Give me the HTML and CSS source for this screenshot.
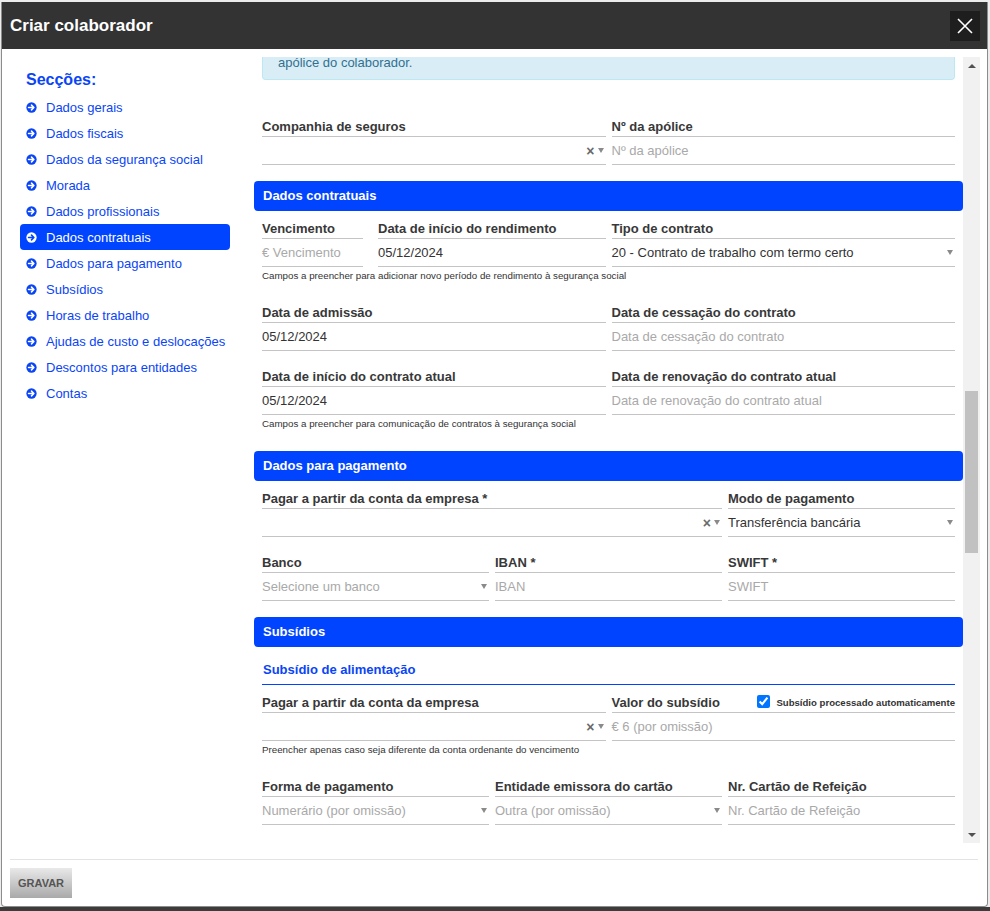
FILE: index.html
```html
<!DOCTYPE html>
<html lang="pt">
<head>
<meta charset="utf-8">
<title>Criar colaborador</title>
<link rel="stylesheet" href="styles.css">
</head>
<body>
<div class="modal">
  <header class="modal-header">
    <h1>Criar colaborador</h1>
    <button class="close" aria-label="Fechar">
      <svg width="16" height="16" viewBox="0 0 16 16"><path d="M1 1L15 15M15 1L1 15" stroke="#fff" stroke-width="1.6" fill="none"/></svg>
    </button>
  </header>
  <div class="modal-body">
    <nav class="sidebar">
      <h2>Secções:</h2>
      <ul class="nav">
        <li><a class="nav-item"><svg class="ico" viewBox="0 0 12 12"><circle cx="6" cy="6" r="5.6" class="ico-c"/><path d="M2.8 6H8.4M6 3.4L8.6 6L6 8.6" class="ico-a"/></svg>Dados gerais</a></li>
        <li><a class="nav-item"><svg class="ico" viewBox="0 0 12 12"><circle cx="6" cy="6" r="5.6" class="ico-c"/><path d="M2.8 6H8.4M6 3.4L8.6 6L6 8.6" class="ico-a"/></svg>Dados fiscais</a></li>
        <li><a class="nav-item"><svg class="ico" viewBox="0 0 12 12"><circle cx="6" cy="6" r="5.6" class="ico-c"/><path d="M2.8 6H8.4M6 3.4L8.6 6L6 8.6" class="ico-a"/></svg>Dados da segurança social</a></li>
        <li><a class="nav-item"><svg class="ico" viewBox="0 0 12 12"><circle cx="6" cy="6" r="5.6" class="ico-c"/><path d="M2.8 6H8.4M6 3.4L8.6 6L6 8.6" class="ico-a"/></svg>Morada</a></li>
        <li><a class="nav-item"><svg class="ico" viewBox="0 0 12 12"><circle cx="6" cy="6" r="5.6" class="ico-c"/><path d="M2.8 6H8.4M6 3.4L8.6 6L6 8.6" class="ico-a"/></svg>Dados profissionais</a></li>
        <li><a class="nav-item active"><svg class="ico" viewBox="0 0 12 12"><circle cx="6" cy="6" r="5.6" class="ico-c"/><path d="M2.8 6H8.4M6 3.4L8.6 6L6 8.6" class="ico-a"/></svg>Dados contratuais</a></li>
        <li><a class="nav-item"><svg class="ico" viewBox="0 0 12 12"><circle cx="6" cy="6" r="5.6" class="ico-c"/><path d="M2.8 6H8.4M6 3.4L8.6 6L6 8.6" class="ico-a"/></svg>Dados para pagamento</a></li>
        <li><a class="nav-item"><svg class="ico" viewBox="0 0 12 12"><circle cx="6" cy="6" r="5.6" class="ico-c"/><path d="M2.8 6H8.4M6 3.4L8.6 6L6 8.6" class="ico-a"/></svg>Subsídios</a></li>
        <li><a class="nav-item"><svg class="ico" viewBox="0 0 12 12"><circle cx="6" cy="6" r="5.6" class="ico-c"/><path d="M2.8 6H8.4M6 3.4L8.6 6L6 8.6" class="ico-a"/></svg>Horas de trabalho</a></li>
        <li><a class="nav-item"><svg class="ico" viewBox="0 0 12 12"><circle cx="6" cy="6" r="5.6" class="ico-c"/><path d="M2.8 6H8.4M6 3.4L8.6 6L6 8.6" class="ico-a"/></svg>Ajudas de custo e deslocações</a></li>
        <li><a class="nav-item"><svg class="ico" viewBox="0 0 12 12"><circle cx="6" cy="6" r="5.6" class="ico-c"/><path d="M2.8 6H8.4M6 3.4L8.6 6L6 8.6" class="ico-a"/></svg>Descontos para entidades</a></li>
        <li><a class="nav-item"><svg class="ico" viewBox="0 0 12 12"><circle cx="6" cy="6" r="5.6" class="ico-c"/><path d="M2.8 6H8.4M6 3.4L8.6 6L6 8.6" class="ico-a"/></svg>Contas</a></li>
      </ul>
    </nav>
    <div class="main">
      <div class="scroller">
        <div class="content">
          <div class="alert">apólice do colaborador.</div>

          <div class="row g2 mt35">
            <div class="field">
              <div class="f-label">Companhia de seguros</div>
              <div class="f-input"><span class="val"></span><span class="sel-icons"><span class="clear">×</span><span class="caret"></span></span></div>
            </div>
            <div class="field">
              <div class="f-label">Nº da apólice</div>
              <div class="f-input"><span class="ph">Nº da apólice</span></div>
            </div>
          </div>

          <div class="section-title mt16">Dados contratuais</div>

          <div class="row g2 mt6">
            <div class="row gv">
              <div class="field">
                <div class="f-label">Vencimento</div>
                <div class="f-input"><span class="ph">€ Vencimento</span></div>
              </div>
              <div class="field">
                <div class="f-label">Data de início do rendimento</div>
                <div class="f-input"><span class="val">05/12/2024</span></div>
              </div>
            </div>
            <div class="field">
              <div class="f-label">Tipo de contrato</div>
              <div class="f-input"><span class="val">20 - Contrato de trabalho com termo certo</span><span class="sel-icons"><span class="caret"></span></span></div>
            </div>
          </div>
          <p class="help">Campos a preencher para adicionar novo período de rendimento à segurança social</p>

          <div class="row g2 mt19">
            <div class="field">
              <div class="f-label">Data de admissão</div>
              <div class="f-input"><span class="val">05/12/2024</span></div>
            </div>
            <div class="field">
              <div class="f-label">Data de cessação do contrato</div>
              <div class="f-input"><span class="ph">Data de cessação do contrato</span></div>
            </div>
          </div>

          <div class="row g2 mt14">
            <div class="field">
              <div class="f-label">Data de início do contrato atual</div>
              <div class="f-input"><span class="val">05/12/2024</span></div>
            </div>
            <div class="field">
              <div class="f-label">Data de renovação do contrato atual</div>
              <div class="f-input"><span class="ph">Data de renovação do contrato atual</span></div>
            </div>
          </div>
          <p class="help">Campos a preencher para comunicação de contratos à segurança social</p>

          <div class="section-title mt21">Dados para pagamento</div>

          <div class="row g3 mt6">
            <div class="field span2">
              <div class="f-label">Pagar a partir da conta da empresa *</div>
              <div class="f-input"><span class="val"></span><span class="sel-icons"><span class="clear">×</span><span class="caret"></span></span></div>
            </div>
            <div class="field">
              <div class="f-label">Modo de pagamento</div>
              <div class="f-input"><span class="val">Transferência bancária</span><span class="sel-icons"><span class="caret"></span></span></div>
            </div>
          </div>

          <div class="row g3 mt14">
            <div class="field">
              <div class="f-label">Banco</div>
              <div class="f-input"><span class="ph">Selecione um banco</span><span class="sel-icons"><span class="caret"></span></span></div>
            </div>
            <div class="field">
              <div class="f-label">IBAN *</div>
              <div class="f-input"><span class="ph">IBAN</span></div>
            </div>
            <div class="field">
              <div class="f-label">SWIFT *</div>
              <div class="f-input"><span class="ph">SWIFT</span></div>
            </div>
          </div>

          <div class="section-title mt16">Subsídios</div>
          <div class="subsection">Subsídio de alimentação</div>

          <div class="row g2 mt6">
            <div class="field">
              <div class="f-label">Pagar a partir da conta da empresa</div>
              <div class="f-input"><span class="val"></span><span class="sel-icons"><span class="clear">×</span><span class="caret"></span></span></div>
            </div>
            <div class="field">
              <div class="f-label">Valor do subsídio
                <label class="check"><input type="checkbox" checked><span>Subsídio processado automaticamente</span></label>
              </div>
              <div class="f-input"><span class="ph">€ 6 (por omissão)</span></div>
            </div>
          </div>
          <p class="help">Preencher apenas caso seja diferente da conta ordenante do vencimento</p>

          <div class="row g3 mt19">
            <div class="field">
              <div class="f-label">Forma de pagamento</div>
              <div class="f-input"><span class="ph">Numerário (por omissão)</span><span class="sel-icons"><span class="caret"></span></span></div>
            </div>
            <div class="field">
              <div class="f-label">Entidade emissora do cartão</div>
              <div class="f-input"><span class="ph">Outra (por omissão)</span><span class="sel-icons"><span class="caret"></span></span></div>
            </div>
            <div class="field">
              <div class="f-label">Nr. Cartão de Refeição</div>
              <div class="f-input"><span class="ph">Nr. Cartão de Refeição</span></div>
            </div>
          </div>
        </div>
        <div class="scrollbar">
          <div class="sb-btn"><span class="tri-up"></span></div>
          <div class="sb-track"><div class="sb-thumb"></div></div>
          <div class="sb-btn"><span class="tri-down"></span></div>
        </div>
      </div>
    </div>
  </div>
  <footer class="modal-footer">
    <div class="footer-bar"><button class="btn">GRAVAR</button></div>
  </footer>
</div>
</body>
</html>
```

FILE: styles.css
```css
* { box-sizing: border-box; }
html, body { margin: 0; }
body {
  padding: 2px 0 0 1px;
  background: linear-gradient(to bottom, #ececec 0, #ececec 907px, #3c3c3c 907px);
  min-height: 911px;
  font-family: "Liberation Sans", Arial, sans-serif;
  color: #333;
}
.modal {
  width: 987px;
  background: #fff;
  border: 1px solid #8c8c8c;
  border-top: none;
  border-radius: 0 0 4px 4px;
  display: flex;
  flex-direction: column;
}
.modal-header {
  height: 47px;
  background: #333;
  display: flex;
  align-items: center;
  justify-content: space-between;
  padding: 1px 7px 0 8px;
}
.modal-header h1 {
  margin: 0;
  font-size: 17px;
  font-weight: bold;
  color: #fff;
}
.close {
  width: 30px;
  height: 30px;
  background: #1e1e1e;
  border: none;
  padding: 0;
  display: flex;
  align-items: center;
  justify-content: center;
}
.modal-body {
  display: flex;
  height: 794px;
}
.sidebar {
  width: 252px;
  flex: none;
  padding: 21px 24px 0 18px;
}
.sidebar h2 {
  margin: 0 0 4px 6px;
  font-size: 16px;
  line-height: 20px;
  font-weight: bold;
  color: #0a45f5;
}
.nav { list-style: none; margin: 0; padding: 0; }
.nav-item {
  display: flex;
  align-items: center;
  height: 26px;
  padding-left: 6px;
  border-radius: 4px;
  font-size: 13px;
  color: #0a45f5;
}
.ico { width: 11px; height: 11px; margin-right: 9px; flex: none; }
.ico-c { fill: #0a45f5; }
.ico-a { stroke: #fff; stroke-width: 1.7; fill: none; stroke-linecap: round; stroke-linejoin: round; }
.nav-item.active { background: #0044ff; color: #fff; }
.nav-item.active .ico-c { fill: #fff; }
.nav-item.active .ico-a { stroke: #0044ff; }

.main { flex: 1; padding: 8px 7px 0 0; }
.scroller { display: flex; height: 786px; }
.content { flex: 1; overflow: hidden; }

.alert {
  margin: -2px 8px 0;
  padding: 0 15px 9px;
  background: #d9edf7;
  border: 1px solid #bce8f1;
  border-top: none;
  border-radius: 0 0 4px 4px;
  color: #31708f;
  font-size: 13px;
  line-height: 15px;
}

.row { display: grid; column-gap: 6px; margin-left: 8px; margin-right: 8px; }
.row .row { margin: 0; }
.g2 { grid-template-columns: 1fr 1fr; }
.g3 { grid-template-columns: 1fr 1fr 1fr; }
.gv { grid-template-columns: 101px 1fr; column-gap: 15px; }
.span2 { grid-column: span 2; }
.mt6 { margin-top: 6px; }
.mt14 { margin-top: 14px; }
.mt16 { margin-top: 16px; }
.mt19 { margin-top: 19px; }
.mt21 { margin-top: 21px; }
.mt35 { margin-top: 35px; }

.f-label {
  height: 22px;
  padding-top: 2px;
  line-height: 19px;
  border-bottom: 1px solid #c4c4c4;
  font-size: 13px;
  font-weight: bold;
  color: #383838;
  white-space: nowrap;
  display: flex;
  align-items: center;
  justify-content: space-between;
}
.f-input {
  height: 28px;
  line-height: 27px;
  border-bottom: 1px solid #c4c4c4;
  font-size: 13px;
  color: #333;
  display: flex;
  align-items: center;
  white-space: nowrap;
  padding-right: 2px;
}
.val { flex: 1; }
.ph { flex: 1; color: #a9a9a9; }
.sel-icons { display: flex; align-items: center; gap: 3px; margin-left: auto; }
.clear { font-size: 14px; font-weight: bold; color: #6a6a6a; line-height: 1; }
.caret {
  width: 0; height: 0;
  border-left: 3.5px solid transparent;
  border-right: 3.5px solid transparent;
  border-top: 5px solid #8a8a8a;
}

.help {
  margin: 3px 8px 0;
  font-size: 9.75px;
  line-height: 12px;
  color: #333;
}

.section-title {
  height: 30px;
  line-height: 30px;
  padding: 0 9px;
  background: #0044ff;
  border-radius: 4px;
  color: #fff;
  font-size: 13px;
  font-weight: bold;
}
.subsection {
  margin: 12px 8px 0;
  padding: 0 1px 3px;
  line-height: 22px;
  border-bottom: 1px solid #0044ff;
  color: #0a45f5;
  font-size: 13px;
  font-weight: bold;
}

.check {
  display: flex;
  align-items: center;
  font-size: 9.6px;
  font-weight: bold;
  color: #333;
}
.check input { width: 13px; height: 13px; margin: 0 6px 2px 0; accent-color: #0075ff; }

.scrollbar {
  width: 17px;
  flex: none;
  background: #f1f1f1;
  display: flex;
  flex-direction: column;
}
.sb-btn { height: 17px; display: flex; align-items: center; justify-content: center; flex: none; }
.tri-up { width: 0; height: 0; border-left: 4px solid transparent; border-right: 4px solid transparent; border-bottom: 4px solid #505050; }
.tri-down { width: 0; height: 0; border-left: 4px solid transparent; border-right: 4px solid transparent; border-top: 4px solid #505050; }
.sb-track { flex: 1; padding: 317px 2px 0; }
.sb-thumb { height: 162px; background: #c1c1c1; }

.modal-footer { padding: 16px 9px 0 8px; }
.footer-bar { border-top: 1px solid #e3e3e3; padding: 8px 0; }
.btn {
  height: 30px;
  padding: 0 8px;
  border: none;
  background: linear-gradient(to bottom, #e9e9e9, #a9a9a9);
  font-family: "Liberation Sans", Arial, sans-serif;
  font-size: 11px;
  font-weight: bold;
  color: #555;
  display: block;
}
```
